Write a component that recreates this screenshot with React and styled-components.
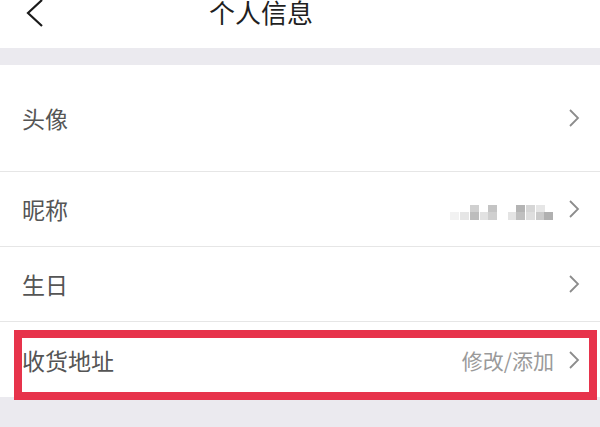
import styled, { createGlobalStyle } from "styled-components";

const GlobalStyle = createGlobalStyle`
  html, body {
    margin: 0;
    padding: 0;
    background: #ebeaef;
  }
  body {
    font-family: "Noto Sans CJK SC", "Noto Sans", sans-serif;
  }
`;

const rows = [
  { label: "头像", tall: true },
  { label: "昵称", blurred: true },
  { label: "生日" },
  { label: "收货地址", value: "修改/添加", marked: true },
];

// mosaic cells for the hidden nickname: [x, y, shade]
const mosaic = [
  [0, 14, "#f2f2f2"], [10, 14, "#e6e6e6"], [20, 7, "#d0d0d0"], [20, 14, "#bdbdbd"],
  [30, 14, "#e2e2e2"], [38, 7, "#c4c4c4"], [38, 14, "#cfcfcf"],
  [58, 14, "#e4e4e4"], [66, 7, "#b4b4b4"], [66, 14, "#c0c0c0"], [76, 7, "#d6d6d6"],
  [76, 14, "#dedede"], [86, 7, "#e6e6e6"], [86, 14, "#cacaca"], [94, 14, "#b0b0b0"],
];

export default function App() {
  return (
    <>
      <GlobalStyle />
      <Page>
        <Header>
          <BackButton>
            <svg width="20" height="30" viewBox="0 0 20 30">
              <polyline points="17,1 3,14 17,27" fill="none" stroke="#1a1a1a" strokeWidth="2.2" />
            </svg>
          </BackButton>
          <Title>个人信息</Title>
        </Header>
        <Gap />
        <List>
          {rows.map((r) => (
            <Row key={r.label} $tall={r.tall}>
              <Label>{r.label}</Label>
              <Right>
                {r.blurred && (
                  <svg width="104" height="22" viewBox="0 0 104 22">
                    {mosaic.map(([x, y, c], i) => (
                      <rect key={i} x={x} y={y} width="9" height="8" fill={c} />
                    ))}
                  </svg>
                )}
                {r.value && <Value>{r.value}</Value>}
                <svg width="12" height="20" viewBox="0 0 12 20">
                  <polyline points="2,2 10,10 2,18" fill="none" stroke="#8c8c8c" strokeWidth="1.8" />
                </svg>
              </Right>
              {r.marked && <Highlight />}
            </Row>
          ))}
        </List>
      </Page>
    </>
  );
}

const Page = styled.div`
  width: 600px;
  height: 427px;
  overflow: hidden;
  background: #ebeaef;
`;

const Header = styled.div`
  position: relative;
  height: 48px;
  padding-right: 78px;
  box-sizing: border-box;
  background: #ffffff;
  display: flex;
  justify-content: center;
  align-items: flex-start;
`;

const BackButton = styled.div`
  position: absolute;
  left: 25px;
  top: -1px;
  display: flex;
`;

const Title = styled.div`
  font-size: 26px;
  line-height: 28px;
  margin-top: -2px;
  color: #1f1f1f;
`;

const Gap = styled.div`
  height: 17px;
`;

const List = styled.div`
  background: #ffffff;
`;

const Row = styled.div`
  position: relative;
  height: ${(p) => (p.$tall ? "107px" : "75px")};
  display: flex;
  align-items: center;
  justify-content: space-between;
  padding: 0 20px 0 22px;
  border-bottom: 1px solid #e6e6e6;
  box-sizing: border-box;

  &:last-child {
    border-bottom: none;
  }
`;

const Label = styled.span`
  font-size: 23px;
  color: #555555;
`;

const Right = styled.div`
  display: flex;
  align-items: center;
  gap: 14px;
`;

const Value = styled.span`
  font-size: 21px;
  color: #9a9a9a;
`;

const Highlight = styled.div`
  position: absolute;
  left: 14px;
  right: 3px;
  top: 8px;
  height: 70px;
  border: 8px solid #e7334b;
  box-sizing: border-box;
  pointer-events: none;
`;
